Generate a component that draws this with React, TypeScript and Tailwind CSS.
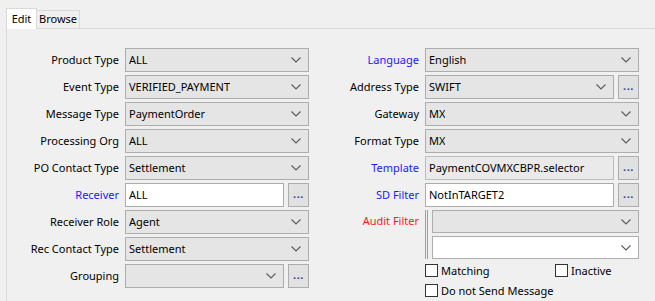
import React from "react";

const font = { fontFamily: '"Segoe UI", "Noto Sans", "Liberation Sans", sans-serif' };

function Chevron() {
  return (
    <svg width="10" height="6" viewBox="0 0 10 6" className="shrink-0">
      <path d="M0.5 0.5 L5 5 L9.5 0.5" fill="none" stroke="#5a5a5a" strokeWidth="1.1" />
    </svg>
  );
}

function Combo({ value, width, height = 24 }: { value?: string; width: number; height?: number }) {
  return (
    <div
      className="flex items-center justify-between border border-[#adadad] bg-[#e5e5e5] pl-[3px] pr-[7px] text-[11px] text-black"
      style={{ width, height }}
    >
      <span className="truncate">{value}</span>
      <Chevron />
    </div>
  );
}

function TextBox({ value, width, grey }: { value: string; width: number; grey?: boolean }) {
  return (
    <div
      className={`flex h-[24px] items-center border pl-[3px] text-[11px] text-black ${
        grey ? "border-[#bcbcbc] bg-[#eaeaea]" : "border-[#acacac] bg-white"
      }`}
      style={{ width }}
    >
      {value}
    </div>
  );
}

function Dots() {
  return (
    <div className="ml-[4px] flex h-[24px] w-[21px] items-center justify-center border border-[#adadad] bg-[#e1e1e1] pb-[2px] text-[11px] font-bold tracking-[0.5px] text-[#3c3c8c]">
      ...
    </div>
  );
}

function Row({
  label,
  color = "text-black",
  labelWidth,
  children,
}: {
  label: string;
  color?: string;
  labelWidth: number;
  children: React.ReactNode;
}) {
  return (
    <div className="flex h-[24px] items-center">
      <div className={`shrink-0 pr-[6px] text-right text-[11px] ${color}`} style={{ width: labelWidth }}>
        {label}
      </div>
      {children}
    </div>
  );
}

function Check({ label }: { label: string }) {
  return (
    <div className="flex h-[13px] items-center gap-[3px] text-[11px] leading-none text-black">
      <div className="h-[13px] w-[13px] shrink-0 border border-[#333] bg-white" />
      <span>{label}</span>
    </div>
  );
}

export default function App() {
  const L = 118;
  const R = 110;
  return (
    <div className="relative h-[301px] w-[655px] overflow-hidden bg-[#f0f0f0]" style={font}>
      <div className="flex items-end pl-[6px] pt-[8px]">
        <div className="z-10 -mb-px flex h-[21px] w-[31px] items-center justify-center border border-b-0 border-[#d9d9d9] bg-white text-[11px] text-black">
          Edit
        </div>
        <div className="flex h-[18px] w-[43px] items-center justify-center border border-l-0 border-b-0 border-[#d9d9d9] bg-[#f0f0f0] text-[11px] text-black">
          Browse
        </div>
      </div>
      <div className="ml-[6px] h-[280px] border-l border-t border-[#d9d9d9] bg-[#f0f0f0] pt-[19px]">
        <div className="flex">
          <div className="flex w-[302px] flex-col gap-[3px]">
            <Row label="Product Type" labelWidth={L}>
              <Combo value="ALL" width={184} />
            </Row>
            <Row label="Event Type" labelWidth={L}>
              <Combo value="VERIFIED_PAYMENT" width={184} />
            </Row>
            <Row label="Message Type" labelWidth={L}>
              <Combo value="PaymentOrder" width={184} />
            </Row>
            <Row label="Processing Org" labelWidth={L}>
              <Combo value="ALL" width={184} />
            </Row>
            <Row label="PO Contact Type" labelWidth={L}>
              <Combo value="Settlement" width={184} />
            </Row>
            <Row label="Receiver" labelWidth={L} color="text-[#1a1aff]">
              <TextBox value="ALL" width={159} />
              <Dots />
            </Row>
            <Row label="Receiver Role" labelWidth={L}>
              <Combo value="Agent" width={184} />
            </Row>
            <Row label="Rec Contact Type" labelWidth={L}>
              <Combo value="Settlement" width={184} />
            </Row>
            <Row label="Grouping" labelWidth={L}>
              <Combo value="" width={159} />
              <Dots />
            </Row>
          </div>
          <div className="ml-[6px] flex flex-col gap-[3px]">
            <Row label="Language" labelWidth={R} color="text-[#1a1aff]">
              <Combo value="English" width={214} />
            </Row>
            <Row label="Address Type" labelWidth={R}>
              <Combo value="SWIFT" width={189} />
              <Dots />
            </Row>
            <Row label="Gateway" labelWidth={R}>
              <Combo value="MX" width={214} />
            </Row>
            <Row label="Format Type" labelWidth={R}>
              <Combo value="MX" width={214} />
            </Row>
            <Row label="Template" labelWidth={R} color="text-[#1a1aff]">
              <TextBox value="PaymentCOVMXCBPR.selector" width={189} grey />
              <Dots />
            </Row>
            <Row label="SD Filter" labelWidth={R} color="text-[#1a1aff]">
              <TextBox value="NotInTARGET2" width={189} />
              <Dots />
            </Row>
            <div className="flex">
              <div
                className="shrink-0 pr-[6px] pt-[3px] text-right text-[11px] text-[#ff1a1a]"
                style={{ width: R }}
              >
                Audit Filter
              </div>
              <div className="flex border-l-[3px] border-double border-[#a0a0a0] pl-[4px]">
                <div className="flex flex-col gap-[3px]">
                  <Combo value="" width={207} height={23} />
                  <div className="flex h-[23px] w-[207px] items-center justify-end border border-[#adadad] bg-white pr-[7px]">
                    <Chevron />
                  </div>
                </div>
              </div>
            </div>
            <div className="mt-[2px] flex flex-col gap-[7px]" style={{ marginLeft: R }}>
              <div className="flex">
                <div className="w-[130px]">
                  <Check label="Matching" />
                </div>
                <Check label="Inactive" />
              </div>
              <Check label="Do not Send Message" />
            </div>
          </div>
        </div>
      </div>
    </div>
  );
}
